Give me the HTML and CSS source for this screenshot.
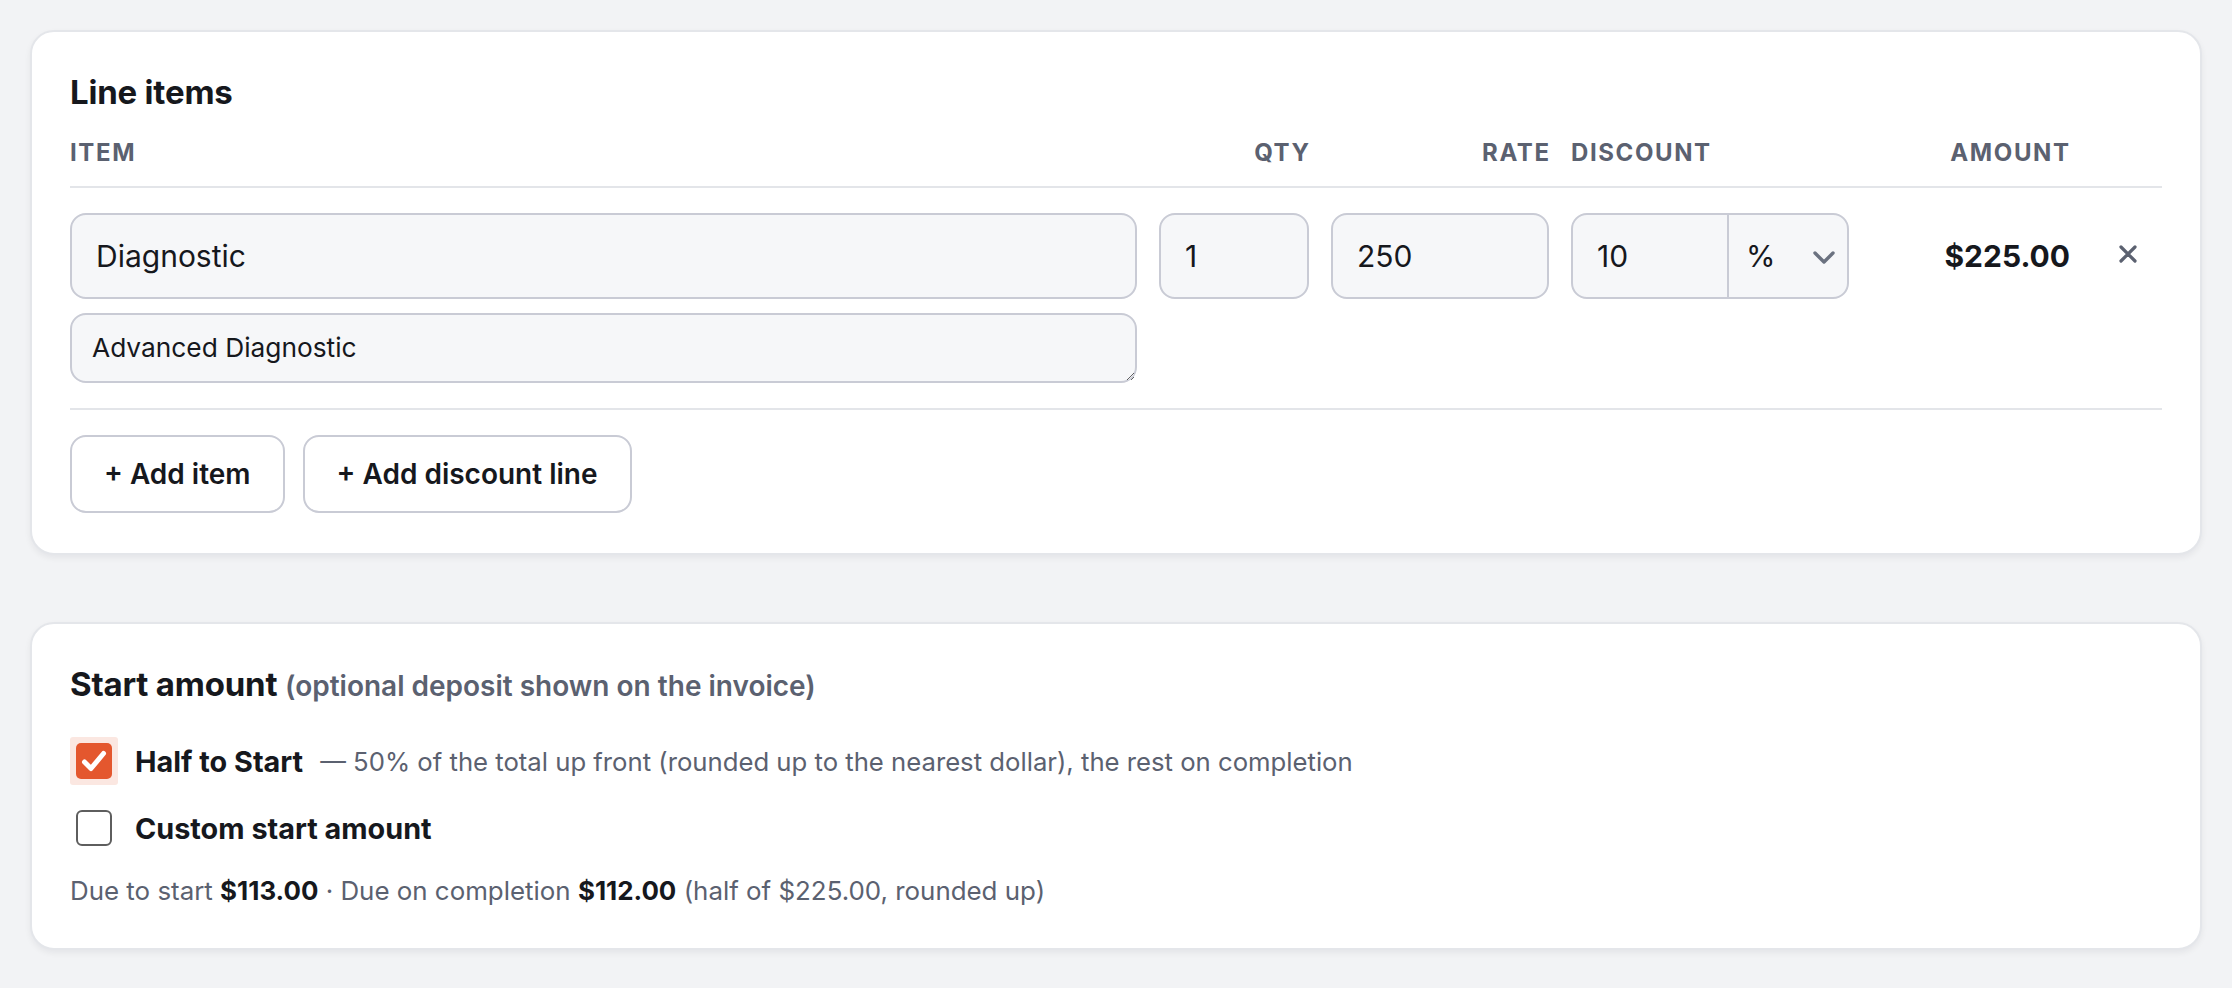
FILE: index.html
```html
<!DOCTYPE html>
<html lang="en">
<head>
<meta charset="utf-8">
<title>Invoice line items</title>
<link rel="stylesheet" href="styles.css">
</head>
<body>
<main class="page">
  <section class="card">
    <h2 class="card-title">Line items</h2>
    <div class="grid head">
      <div class="th">Item</div>
      <div class="th right">Qty</div>
      <div class="th right">Rate</div>
      <div class="th">Discount</div>
      <div class="th right">Amount</div>
      <div class="th"></div>
    </div>
    <div class="grid line">
      <input class="field" type="text" value="Diagnostic">
      <input class="field" type="text" value="1">
      <input class="field" type="text" value="250">
      <div class="disc">
        <input class="disc-input" type="text" value="10">
        <div class="disc-select">
          <select class="select"><option>%</option><option>$</option></select>
          <svg class="chev" width="22" height="13" viewBox="0 0 22 13"><polyline points="2,2 11,11 20,2" fill="none" stroke="#6b7280" stroke-width="3.4" stroke-linecap="round" stroke-linejoin="round"/></svg>
        </div>
      </div>
      <div class="amount">$225.00</div>
      <button class="remove" type="button" aria-label="Remove">
        <svg width="18" height="18" viewBox="0 0 18 18"><path d="M2 2 L16 16 M16 2 L2 16" stroke="#5b6170" stroke-width="3.2" stroke-linecap="round"/></svg>
      </button>
      <textarea class="desc" rows="1">Advanced Diagnostic</textarea>
    </div>
    <div class="actions">
      <button class="btn" type="button">+ Add item</button>
      <button class="btn" type="button">+ Add discount line</button>
    </div>
  </section>

  <section class="card">
    <h2 class="card-title second">Start amount <span class="sub">(optional deposit shown on the invoice)</span></h2>
    <div class="options">
      <label class="opt">
        <span class="cb-wrap focus"><span class="cb checked"><svg width="36" height="36" viewBox="0 0 36 36"><polyline points="8.5,19 15,25.5 27.5,10.5" fill="none" stroke="#ffffff" stroke-width="5" stroke-linecap="round" stroke-linejoin="round"/></svg></span></span>
        <span class="opt-label">Half to Start</span>
        <span class="opt-desc">— 50% of the total up front (rounded up to the nearest dollar), the rest on completion</span>
      </label>
      <label class="opt">
        <span class="cb-wrap"><span class="cb"></span></span>
        <span class="opt-label">Custom start amount</span>
      </label>
    </div>
    <p class="summary">Due to start <b>$113.00</b> · Due on completion <b>$112.00</b> (half of $225.00, rounded up)</p>
  </section>
</main>
</body>
</html>
```

FILE: styles.css
```css
* { box-sizing: border-box; }

html, body {
  margin: 0;
  padding: 0;
  background: #f2f3f5;
}

body {
  font-family: Inter, "Liberation Sans", sans-serif;
  color: #16181d;
}

.page {
  padding: 30px;
  display: flex;
  flex-direction: column;
  gap: 67px;
}

.card {
  background: #ffffff;
  border: 2px solid #e4e6ea;
  border-radius: 24px;
  padding: 40px 38px;
  box-shadow: 0 3px 6px rgba(16, 24, 40, 0.06);
}

.card-title {
  margin: 0;
  font-size: 33px;
  line-height: 40px;
  font-weight: 700;
  letter-spacing: -0.2px;
  color: #16181d;
}

.card-title.second {
  font-size: 33px;
}

.sub {
  font-size: 28px;
  font-weight: 600;
  color: #5b6170;
  letter-spacing: 0;
}

.grid {
  display: grid;
  grid-template-columns: 1fr 150px 218px 278px 198px 71px;
  column-gap: 22px;
}

.head {
  margin-top: 25px;
  padding-bottom: 17px;
  border-bottom: 2px solid #e3e5e9;
}

.th {
  font-size: 24px;
  line-height: 32px;
  font-weight: 700;
  letter-spacing: 1.6px;
  text-transform: uppercase;
  color: #5b6170;
}

.th.right {
  text-align: right;
  margin-right: -1.6px;
}

.line {
  padding: 25px 0;
  row-gap: 14px;
  border-bottom: 2px solid #e3e5e9;
}

.field,
.disc,
.desc {
  border: 2px solid #c9cbd5;
  border-radius: 16px;
  background: #f6f7f9;
}

.field {
  height: 86px;
  padding: 0 24px;
  font-family: inherit;
  font-size: 30px;
  color: #16181d;
  width: 100%;
  outline: none;
}

.disc {
  height: 86px;
  display: flex;
  overflow: hidden;
}

.disc-input {
  width: 154px;
  flex: none;
  border: 0;
  background: transparent;
  padding: 0 24px;
  font-family: inherit;
  font-size: 30px;
  color: #16181d;
  outline: none;
}

.disc-select {
  position: relative;
  flex: 1;
  border-left: 2px solid #c9cbd5;
}

.select {
  appearance: none;
  -webkit-appearance: none;
  width: 100%;
  height: 100%;
  border: 0;
  background: transparent;
  padding: 0 40px 0 17px;
  font-family: inherit;
  font-size: 30px;
  color: #16181d;
  outline: none;
}

.chev {
  position: absolute;
  right: 12px;
  top: 36px;
  pointer-events: none;
}

.amount {
  align-self: center;
  text-align: right;
  font-size: 30px;
  font-weight: 700;
  color: #16181d;
  margin-right: -1px;
}

.remove {
  align-self: center;
  justify-self: center;
  width: 40px;
  height: 40px;
  border: 0;
  padding: 0;
  background: transparent;
  display: flex;
  align-items: center;
  justify-content: center;
  margin-left: 3px;
  margin-top: -4px;
  cursor: pointer;
}

.desc {
  grid-column: 1;
  height: 70px;
  padding: 16px 20px;
  font-family: inherit;
  font-size: 26.3px;
  line-height: 34px;
  color: #16181d;
  resize: vertical;
  outline: none;
  overflow: hidden;
}

.actions {
  margin-top: 25px;
  display: flex;
  gap: 18px;
}

.btn {
  height: 78px;
  padding: 0 32px;
  border: 2px solid #c9cbd5;
  border-radius: 16px;
  background: #ffffff;
  font-family: inherit;
  font-size: 28px;
  font-weight: 600;
  color: #16181d;
  cursor: pointer;
}

.options {
  margin-top: 31px;
  display: flex;
  flex-direction: column;
  gap: 19px;
}

.opt {
  display: flex;
  align-items: center;
  height: 48px;
}

.cb-wrap {
  width: 48px;
  height: 48px;
  padding: 6px;
  border-radius: 3px;
  flex: none;
  margin-right: 17px;
}

.cb-wrap.focus {
  background: #fbe7e1;
}

.cb {
  display: block;
  width: 36px;
  height: 36px;
  border: 2.5px solid #5e5e5e;
  border-radius: 6px;
  background: #ffffff;
}

.cb.checked {
  border: 0;
  background: #e4572e;
  border-radius: 5px;
}

.cb svg {
  display: block;
}

.opt-label {
  font-size: 28.8px;
  font-weight: 700;
  color: #16181d;
}

.opt-desc {
  margin-left: 17px;
  font-size: 25.7px;
  color: #5b6170;
}

.summary {
  margin: 22px 0 0;
  font-size: 25.9px;
  line-height: 34px;
  color: #5b6170;
}

.summary b {
  font-weight: 700;
  color: #16181d;
}
```
